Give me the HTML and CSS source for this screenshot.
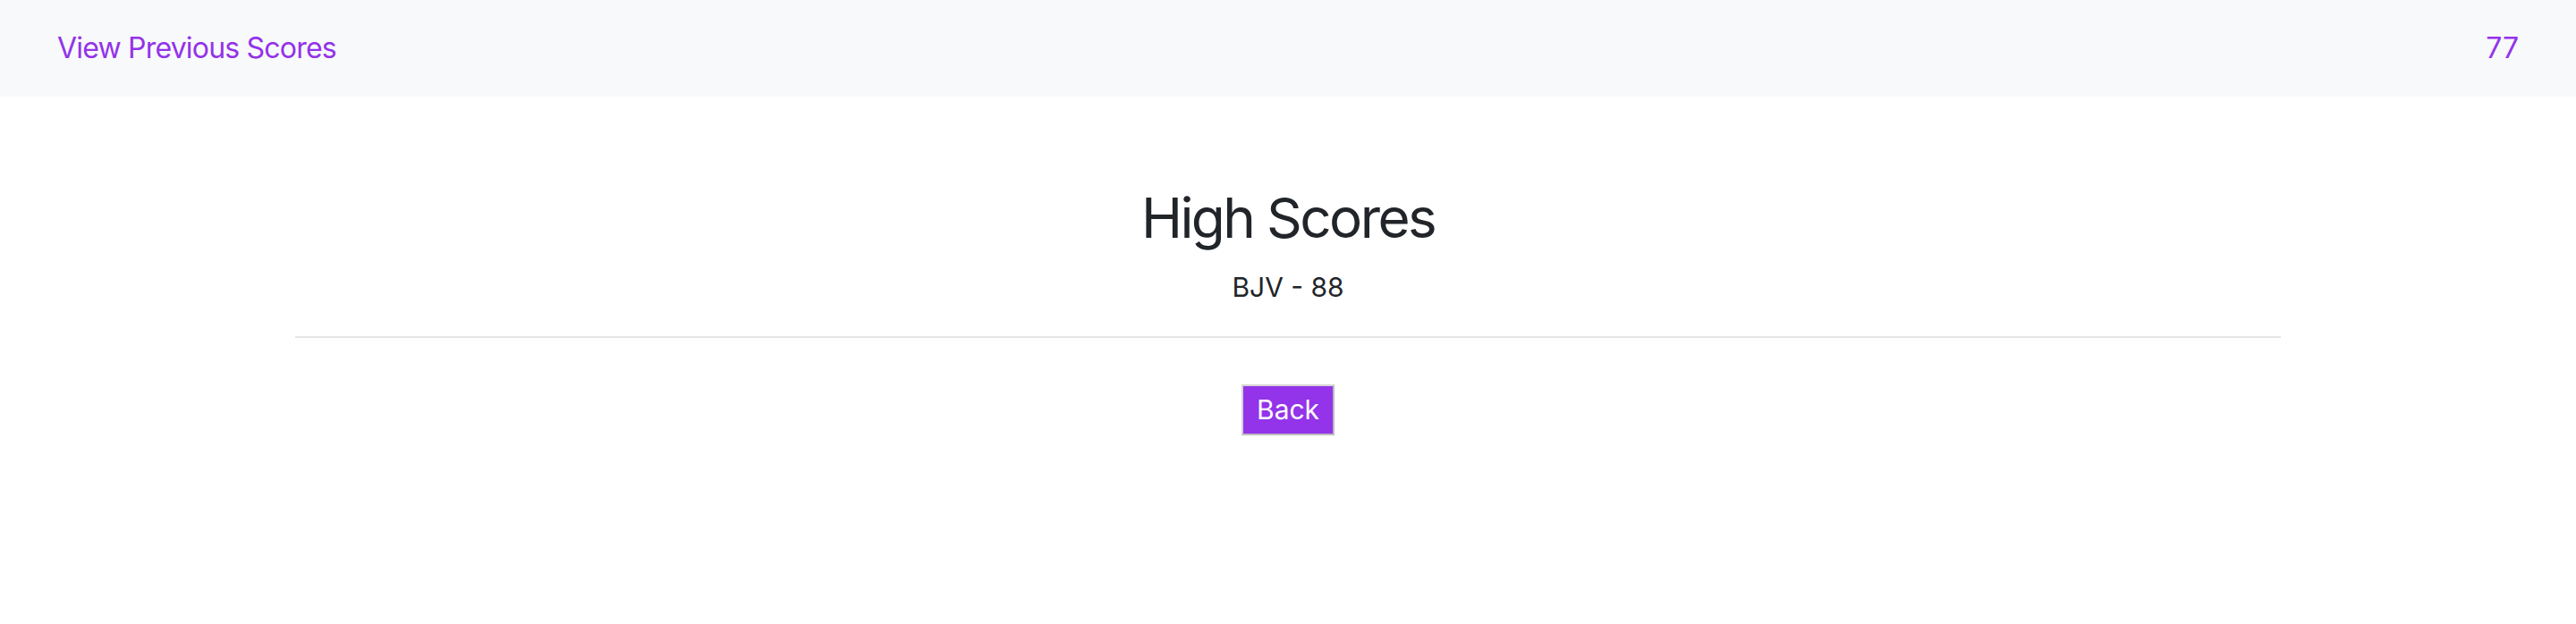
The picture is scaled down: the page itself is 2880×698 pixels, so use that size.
FILE: index.html
```html
<!DOCTYPE html>
<html lang="en">
<head>
<meta charset="utf-8">
<title>High Scores</title>
<link rel="stylesheet" href="styles.css">
</head>
<body>
<nav class="navbar">
  <a class="nav-link" href="#">View Previous Scores</a>
  <span class="nav-score">77</span>
</nav>
<main class="container">
  <h2 class="title">High Scores</h2>
  <p class="score">BJV - 88</p>
  <hr class="divider">
  <div class="actions">
    <button class="back-btn" type="button">Back</button>
  </div>
</main>
</body>
</html>
```
FILE: styles.css
```css
* { box-sizing: border-box; }
html, body {
  margin: 0;
  padding: 0;
  background: #ffffff;
  font-family: Inter, "Liberation Sans", sans-serif;
  color: #212529;
}
.navbar {
  height: 108px;
  background: #f8f9fa;
  display: flex;
  align-items: center;
  justify-content: space-between;
  padding: 0 64px;
}
.nav-link, .nav-score {
  color: #9333ea;
  font-size: 32px;
  text-decoration: none;
  line-height: 1.5;
}
.nav-link {
  letter-spacing: -0.8px;
}
.container {
  width: 2220px;
  margin: 0 auto;
  padding-top: 98px;
  text-align: center;
}
.title {
  margin: 0;
  font-size: 62px;
  font-weight: 400;
  line-height: 1.24;
  letter-spacing: -2.6px;
}
.score {
  margin: 16px 0 0;
  font-size: 30px;
  line-height: 1.5;
}
.divider {
  margin: 32px 0 0;
  border: 0;
  border-top: 2px solid #e5e5e5;
}
.actions {
  padding-top: 52px;
  display: flex;
  justify-content: center;
}
.back-btn {
  font-family: inherit;
  font-size: 30px;
  line-height: 1.21;
  color: #ffffff;
  background: #9333ea;
  border: 2px solid #d4d4d4;
  border-right-color: #bcbcbc;
  border-bottom-color: #bcbcbc;
  padding: 8px 15px;
  height: 57px;
  width: 104px;
}
```
